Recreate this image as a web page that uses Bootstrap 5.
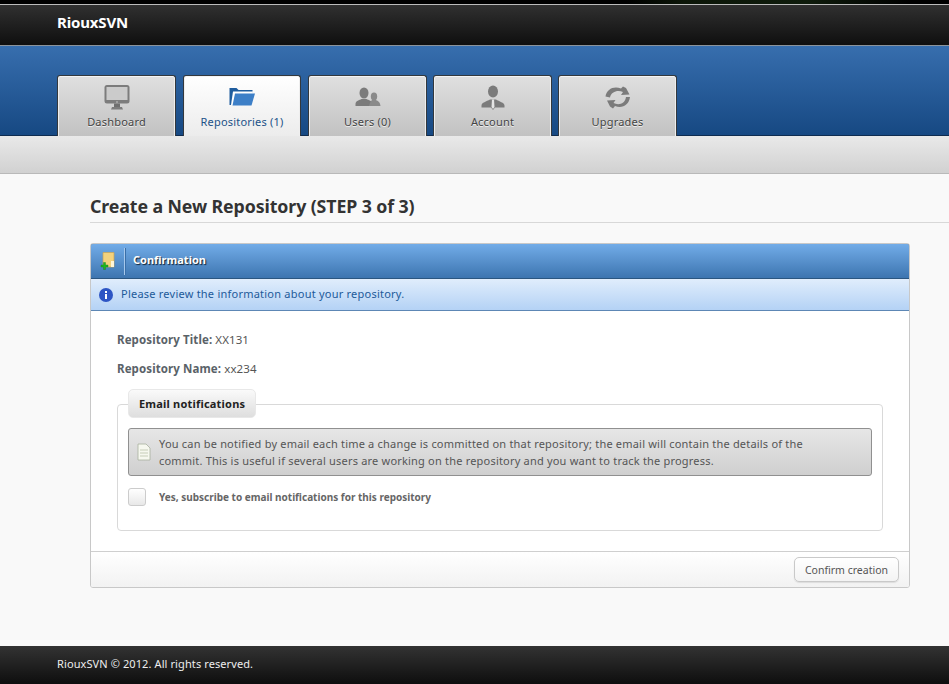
<!DOCTYPE html>
<html lang="en">
<head>
<meta charset="utf-8">
<title>RiouxSVN</title>
<link href="https://cdn.jsdelivr.net/npm/bootstrap@5.3.0/dist/css/bootstrap.min.css" rel="stylesheet">
<style>
html,body{height:100%}
body{background:#f9f9f9;font-family:"Noto Sans","Open Sans",sans-serif;font-size:11px;letter-spacing:.2px;color:#555;overflow:hidden}
.strip{height:4px;background:linear-gradient(90deg,#000 0,#000 66%,#0c1608 72%,#0f1c0c 85%,#000 96%)}
.topbar{height:42px;background:linear-gradient(#303030,#0f0f0f);border-top:1px solid #bbb;border-bottom:1px solid #8b949c;padding-left:57px;padding-top:8px}
.brand{color:#fff;font-size:15px;font-weight:700;line-height:19px;letter-spacing:-.15px}
.blueband{height:90px;background:linear-gradient(#376eae,#164882);padding:29px 0 0 57px;gap:6px;box-shadow:inset 0 -1px 0 #0f2c50}
.tabitem{width:119px;height:61px;background:linear-gradient(#e0e0e0,#c2c2c2);border:1px solid #33383d;border-bottom:0;border-radius:3px 3px 0 0;box-shadow:inset 0 1px 0 #f4f4f4,inset 1px 0 0 #eee,inset -1px 0 0 #eee;color:#444;text-decoration:none;font-size:11px;line-height:16px;padding-top:9px;text-shadow:0 1px 0 #eee}
.tabitem svg{display:block;margin:0 auto 3px;height:26px;width:28px}
.tabitem.on{background:linear-gradient(#fff,#ececec);color:#1c5288;width:118px;margin:0 1px;text-shadow:none}
.subbar{height:38px;background:linear-gradient(#e9e9e9,#d1d1d1);border-bottom:1px solid #b9b9b9}
.pagetitle{margin:19px 0 0 90px;padding-bottom:2px;border-bottom:1px solid #d8d8d8;font-size:17.75px;line-height:27px;font-weight:700;color:#333;letter-spacing:-.1px}
.panelbox{margin:20px 39px 0 90px;height:345px;border:1px solid #c8c8c8;border-radius:3px;background:#fff;--bs-card-bg:#fff;overflow:hidden}
.panelhead{height:36px;flex:none;margin:-1px -1px 0;background:linear-gradient(#72ace8,#3d75b0);border:1px solid #2b5680;border-radius:3px 3px 0 0;color:#fff;font-weight:700;font-size:11px;letter-spacing:0;text-shadow:1px 1px 1px #123}
.iconcell{width:34px;height:27px;border-right:1px solid #a6c8ec;box-shadow:1px 0 0 #3a6fa8}
.paneltitle{padding:0 0 1px 8px}
.infobar{height:32px;flex:none;background:linear-gradient(#e0edfc,#b4d2f5);border-bottom:1px solid #5d87b5;color:#1d5a9a;font-size:11px;letter-spacing:.23px;padding-left:8px;gap:8px}
.bodyarea{padding:20px 26px 0 26px;flex:1;color:#555}
.fieldrow{line-height:18px;margin-bottom:11px;font-size:11.5px;letter-spacing:.1px}
.fieldrow b{font-weight:700;color:#5a6268}
.mailset{border:1px solid #d9d9d9;border-radius:4px;padding:0 10px;height:141px;margin:12px 0 0}
.mailset legend{float:none;width:auto;margin:0;font-size:11px;height:29px;line-height:27px;border:1px solid #e8e8e8;border-radius:5px;background:linear-gradient(#fafafa,#dedede);color:#222;font-weight:700;padding:0 10px;letter-spacing:.2px;transform:translateY(-1px)}
.notebox{height:48px;margin-top:9px;border:1px solid #909090;border-radius:3px;background:linear-gradient(#e6e6e6,#cfcfcf);padding:0 24px 0 8px;gap:8px;color:#555;font-size:11px;line-height:17px}
.notebox svg{flex:none}
.checkrow{margin-top:12px;gap:13px;font-weight:700;font-size:10px;color:#666;letter-spacing:0}
.checkrow .form-check-input{width:18px;height:18px;margin:0;border:1px solid #ccc;border-radius:3px;background:linear-gradient(#fff,#e8e8e8);float:none}
.panelfoot{height:36px;flex:none;background:linear-gradient(#fff,#f2f2f2);border-top:1px solid #cfcfcf;padding-right:10px;margin:0}
.confirmbtn{height:25px;padding:0 10px;font-size:10.5px;line-height:24px;letter-spacing:0;color:#555;background:linear-gradient(#fff,#f3f3f3);border:1px solid #c9c9c9;border-radius:5px;box-shadow:0 1px 1px #ddd}
.pagefoot{height:38px;background:linear-gradient(#333,#0e0e0e);color:#eee;font-size:11px;letter-spacing:.1px;padding:0 0 1px 57px;margin-top:58px}
</style>
</head>
<body>
<div class="strip"></div>
<header class="topbar"><div class="brand">RiouxSVN</div></header>
<nav class="blueband d-flex align-items-end">
  <a class="tabitem text-center" href="#">
    <svg viewBox="0 0 28 26"><rect x="1.500" y="0" width="25" height="18.500" rx="2.500" fill="#7c7c7c"/><rect x="3.500" y="2" width="21" height="13" fill="#cbcbcb"/><circle cx="14" cy="17" r=".7" fill="#ddd"/><rect x="11" y="18.500" width="6" height="3.500" fill="#6f6f6f"/><path d="M9 22h10l1 2.500H8z" fill="#7c7c7c"/></svg>
    Dashboard</a>
  <a class="tabitem on text-center" href="#">
    <svg viewBox="0 0 28 26"><path d="M1.500 3h7l2 2h14v3H6l-1.500 12h-3z" fill="#1f5d9e"/><path d="M5 6.500h20l-2 13.500H3z" fill="#fff"/><path d="M7 8.500h20L23.500 20.500H4.500z" fill="#3d7fc7"/></svg>
    Repositories (1)</a>
  <a class="tabitem text-center" href="#">
    <svg viewBox="0 0 28 26"><ellipse cx="10" cy="8" rx="4.500" ry="5.500" fill="#7b7b7b"/><path d="M1.500 21v-2c0-3 4-4 6-5h5c2 1 6 2 6 5v2z" fill="#7b7b7b"/><ellipse cx="20" cy="11.500" rx="3.200" ry="4" fill="#8a8a8a"/><path d="M15 21c1-4 2-5 3-6h4c2 1 4 2 4.500 6z" fill="#8a8a8a"/></svg>
    Users (0)</a>
  <a class="tabitem text-center" href="#">
    <svg viewBox="0 0 28 26"><ellipse cx="14" cy="6.500" rx="5" ry="6" fill="#7b7b7b"/><path d="M2.500 22.500v-2c0-3 5-4 8.500-6h6c3 2 8.500 3 8.500 6v2H16l-2 2.500-2-2.500z" fill="#7b7b7b"/><path d="M13 14.500h2l.5 7.500-1.500 2-1.500-2z" fill="#e4e4e4"/></svg>
    Account</a>
  <a class="tabitem text-center" href="#">
    <svg viewBox="0 0 28 26"><path d="M1.500 11.500C2.500 4 10 0.500 17 3.500l2-2 3 1.500 3.500 6.500-8.500.5 2-3C14 4.500 7 6.500 6 12.500z" fill="#7b7b7b"/><path d="M26 12c-1 8-8 12-15 9l-2 2.500-3-2-3-6 8.500-.5-2 3c5 2.500 11.500 1 12.500-6z" fill="#7b7b7b"/></svg>
    Upgrades</a>
</nav>
<div class="subbar"></div>
<h1 class="pagetitle">Create a New Repository (STEP 3 of 3)</h1>
<section class="card panelbox d-flex flex-column">
  <div class="panelhead d-flex align-items-center">
    <div class="iconcell d-flex align-items-center justify-content-center">
      <svg width="16" height="18" viewBox="0 0 16 18"><path d="M3 0.500h11v14.500H3z" fill="#f3d27d" stroke="#c9a453" stroke-width=".7"/><path d="M11 9h3v6h-3z" fill="#fff6d8"/><path d="M1 13h2.500v-2.500h2V13H8v2H5.500v2.500h-2V15H1z" fill="#1eb61e" stroke="#0f7d1a" stroke-width=".4"/></svg>
    </div>
    <div class="paneltitle">Confirmation</div>
  </div>
  <div class="infobar d-flex align-items-center">
    <svg width="14" height="14" viewBox="0 0 14 14"><circle cx="7" cy="7" r="7" fill="#2d55c4"/><rect x="6" y="6" width="2" height="5" fill="#fff"/><rect x="6" y="3" width="2" height="2" fill="#fff"/></svg>
    <span>Please review the information about your repository.</span>
  </div>
  <div class="bodyarea">
    <div class="fieldrow"><b>Repository Title:</b> XX131</div>
    <div class="fieldrow"><b>Repository Name:</b> xx234</div>
    <fieldset class="mailset">
      <legend>Email notifications</legend>
      <div class="notebox d-flex align-items-center">
        <svg width="14" height="18" viewBox="0 0 14 18"><path d="M1 1h8l4 4v12H1z" fill="#f6f8ef" stroke="#a8b0a0" stroke-width=".8"/><path d="M3 7h8M3 10h8M3 13h8" stroke="#c6cdb8"/></svg>
        <div>You can be notified by email each time a change is committed on that repository; the email will contain the details of the commit. This is useful if several users are working on the repository and you want to track the progress.</div>
      </div>
      <label class="checkrow d-flex align-items-center">
        <input class="form-check-input" type="checkbox">
        <span>Yes, subscribe to email notifications for this repository</span>
      </label>
    </fieldset>
  </div>
  <div class="panelfoot d-flex align-items-center justify-content-end">
    <button type="button" class="btn confirmbtn">Confirm creation</button>
  </div>
</section>
<footer class="pagefoot d-flex align-items-center">RiouxSVN © 2012. All rights reserved.</footer>
</body>
</html>
